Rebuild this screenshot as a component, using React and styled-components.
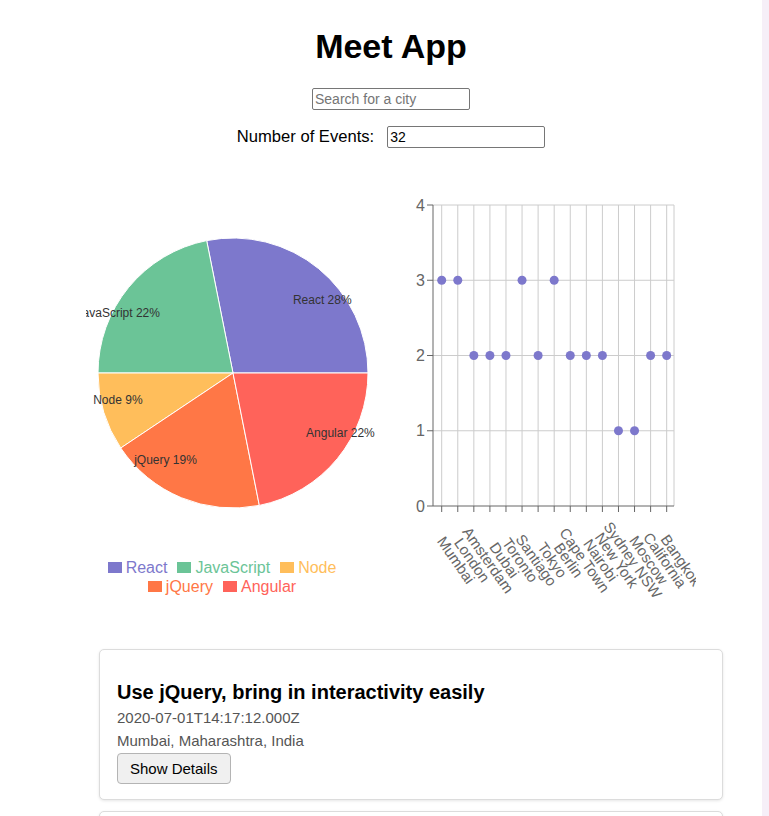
import React from 'react';
import styled, { createGlobalStyle } from 'styled-components';

const GlobalStyle = createGlobalStyle`
  html, body {
    margin: 0;
    padding: 0;
    background: #f6eff8;
  }
  body {
    font-family: "Liberation Sans", Arial, sans-serif;
  }
`;

const COLORS = ['#7d78cc', '#6bc497', '#ffbe5b', '#ff7746', '#ff635a'];

const genres = [
  { name: 'React', value: 9 },
  { name: 'JavaScript', value: 7 },
  { name: 'Node', value: 3 },
  { name: 'jQuery', value: 6 },
  { name: 'Angular', value: 7 },
];

const cities = [
  { city: 'Mumbai', count: 3 },
  { city: 'London', count: 3 },
  { city: 'Amsterdam', count: 2 },
  { city: 'Dubai', count: 2 },
  { city: 'Toronto', count: 2 },
  { city: 'Santiago', count: 3 },
  { city: 'Tokyo', count: 2 },
  { city: 'Berlin', count: 3 },
  { city: 'Cape Town', count: 2 },
  { city: 'Nairobi', count: 2 },
  { city: 'New York', count: 2 },
  { city: 'Sydney NSW', count: 1 },
  { city: 'Moscow', count: 1 },
  { city: 'California', count: 2 },
  { city: 'Bangkok', count: 2 },
];

const events = [
  {
    id: 1,
    summary: 'Use jQuery, bring in interactivity easily',
    created: '2020-07-01T14:17:12.000Z',
    location: 'Mumbai, Maharashtra, India',
  },
  {
    id: 2,
    summary: 'Learn JavaScript',
    created: '2020-05-19T16:00:00.000Z',
    location: 'London, UK',
  },
];

const Page = styled.div`
  width: 762px;
  min-height: 816px;
  background: #fff;
  box-sizing: border-box;
  padding: 26px 0 0 20px;
  overflow: hidden;
`;

const Title = styled.h1`
  margin: 0;
  font-size: 34px;
  line-height: 40px;
  font-weight: bold;
  color: #000;
  text-align: center;
`;

const SearchRow = styled.div`
  display: flex;
  justify-content: center;
  margin-top: 22px;
`;

const NumberRow = styled.div`
  display: flex;
  justify-content: center;
  align-items: center;
  gap: 13px;
  margin-top: 16px;
  font-size: 16.6px;
  color: #000;
`;

const TextInput = styled.input`
  box-sizing: border-box;
  width: 158px;
  height: 22px;
  padding: 1px 2px;
  border: 1px solid #767676;
  border-radius: 2px;
  font-family: "Liberation Sans", Arial, sans-serif;
  font-size: 14px;
  color: #000;
  background: #fff;
  outline: none;
  &::placeholder {
    color: #757575;
  }
`;

const ChartsRow = styled.div`
  display: flex;
  justify-content: center;
  align-items: flex-start;
  margin-top: 42px;
  height: 420px;
`;

const PieColumn = styled.div`
  width: 294px;
  display: flex;
  flex-direction: column;
`;

const Legend = styled.ul`
  list-style: none;
  margin: 0;
  padding: 0 12px 0 0;
  display: flex;
  flex-wrap: wrap;
  justify-content: center;
  font-size: 16px;
  line-height: 19px;
`;

const LegendItem = styled.li`
  display: flex;
  align-items: center;
  margin-right: 10px;
  color: ${(p) => p.$color};
`;

const LegendSwatch = styled.span`
  width: 14px;
  height: 10.5px;
  margin-right: 4px;
  background: ${(p) => p.$color};
`;

const EventList = styled.ul`
  list-style: none;
  margin: 39px 0 0;
  padding: 0 0 0 40px;
`;

const EventCard = styled.li`
  box-sizing: border-box;
  width: 624px;
  margin: 0 auto 11px;
  padding: 30px 17px 15px;
  background: #fff;
  border: 1px solid #dcdcdc;
  border-radius: 5px;
  box-shadow: 0 1px 3px rgba(0, 0, 0, 0.1);
`;

const EventTitle = styled.h2`
  margin: 0;
  font-size: 20px;
  line-height: 24px;
  font-weight: bold;
  color: #000;
`;

const EventMeta = styled.p`
  margin: ${(p) => (p.$first ? '2px' : '0')} 0 0;
  font-size: 15px;
  line-height: 23px;
  color: #555;
`;

const DetailsButton = styled.button`
  margin-top: 1px;
  height: 31px;
  padding: 0 12px;
  font-family: "Liberation Sans", Arial, sans-serif;
  font-size: 15px;
  color: #000;
  background: #f0f0f0;
  border: 1px solid #b4b4b4;
  border-radius: 4px;
`;

const polar = (cx, cy, r, deg) => {
  const a = (deg * Math.PI) / 180;
  return [cx + r * Math.cos(a), cy - r * Math.sin(a)];
};

const GenrePie = () => {
  const cx = 147;
  const cy = 183;
  const r = 135;
  const total = genres.reduce((s, g) => s + g.value, 0);
  let angle = 0;
  const slices = genres.map((g, i) => {
    const start = angle;
    const sweep = (g.value / total) * 360;
    angle += sweep;
    const end = angle;
    const [x1, y1] = polar(cx, cy, r, start);
    const [x2, y2] = polar(cx, cy, r, end);
    const mid = (start + end) / 2;
    const [lx, ly] = polar(cx, cy, r * 0.7, mid);
    return {
      ...g,
      color: COLORS[i],
      d: `M${cx},${cy} L${x1},${y1} A${r},${r} 0 ${sweep > 180 ? 1 : 0} 0 ${x2},${y2} Z`,
      lx,
      ly,
      anchor: lx > cx ? 'start' : 'end',
      pct: Math.round((g.value / total) * 100),
    };
  });

  return (
    <PieColumn>
      <svg width="294" height="368" style={{ display: 'block' }}>
        {slices.map((s) => (
          <path key={s.name} d={s.d} fill={s.color} stroke="#fff" strokeWidth="1" />
        ))}
        {slices.map((s) => (
          <text
            key={s.name}
            x={s.lx}
            y={s.ly}
            fill="#333"
            fontSize="12"
            fontFamily="Liberation Sans, Arial, sans-serif"
            textAnchor={s.anchor}
            dominantBaseline="central"
          >
            {`${s.name} ${s.pct}%`}
          </text>
        ))}
      </svg>
      <Legend>
        {slices.map((s) => (
          <LegendItem key={s.name} $color={s.color}>
            <LegendSwatch $color={s.color} />
            {s.name}
          </LegendItem>
        ))}
      </Legend>
    </PieColumn>
  );
};

const CityScatter = () => {
  const left = 53;
  const right = 294;
  const top = 15;
  const bottom = 316;
  const step = 16.07;
  const x0 = 61.7;
  const yOf = (v) => bottom - ((bottom - top) / 4) * v;
  const font = 'Liberation Sans, Arial, sans-serif';

  return (
    <svg width="316" height="420" style={{ display: 'block' }}>
      {[1, 2, 3, 4].map((v) => (
        <line key={v} x1={left} x2={right} y1={yOf(v)} y2={yOf(v)} stroke="#ccc" />
      ))}
      {cities.map((c, i) => (
        <line key={c.city} x1={x0 + i * step} x2={x0 + i * step} y1={top} y2={bottom} stroke="#ccc" />
      ))}
      <line x1={right} x2={right} y1={top} y2={bottom} stroke="#ccc" />

      <line x1={left} x2={left} y1={top} y2={bottom} stroke="#666" />
      <line x1={left} x2={right} y1={bottom} y2={bottom} stroke="#666" />
      {[0, 1, 2, 3, 4].map((v) => (
        <g key={v}>
          <line x1={left - 6} x2={left} y1={yOf(v)} y2={yOf(v)} stroke="#666" />
          <text
            x={left - 8}
            y={yOf(v)}
            dy="0.355em"
            textAnchor="end"
            fill="#666"
            fontSize="16"
            fontFamily={font}
          >
            {v}
          </text>
        </g>
      ))}
      {cities.map((c, i) => {
        const x = x0 + i * step;
        const tx = x + 14.5;
        const ty = 370;
        return (
          <g key={c.city}>
            <line x1={x} x2={x} y1={bottom} y2={bottom + 6} stroke="#666" />
            <text
              x={tx}
              y={ty}
              textAnchor="middle"
              dominantBaseline="central"
              fill="#666"
              fontSize="15"
              fontFamily={font}
              transform={`rotate(55, ${tx}, ${ty})`}
            >
              {c.city}
            </text>
          </g>
        );
      })}
      {cities.map((c, i) => (
        <circle key={c.city} cx={x0 + i * step} cy={yOf(c.count)} r="4.5" fill={COLORS[0]} />
      ))}
    </svg>
  );
};

const App = () => (
  <>
    <GlobalStyle />
    <Page>
      <Title>Meet App</Title>
      <SearchRow>
        <TextInput type="text" placeholder="Search for a city" />
      </SearchRow>
      <NumberRow>
        <label htmlFor="number-of-events">Number of Events:</label>
        <TextInput id="number-of-events" type="number" defaultValue={32} />
      </NumberRow>
      <ChartsRow>
        <GenrePie />
        <CityScatter />
      </ChartsRow>
      <EventList>
        {events.map((ev) => (
          <EventCard key={ev.id}>
            <EventTitle>{ev.summary}</EventTitle>
            <EventMeta $first>{ev.created}</EventMeta>
            <EventMeta>{ev.location}</EventMeta>
            <DetailsButton>Show Details</DetailsButton>
          </EventCard>
        ))}
      </EventList>
    </Page>
  </>
);

export default App;
